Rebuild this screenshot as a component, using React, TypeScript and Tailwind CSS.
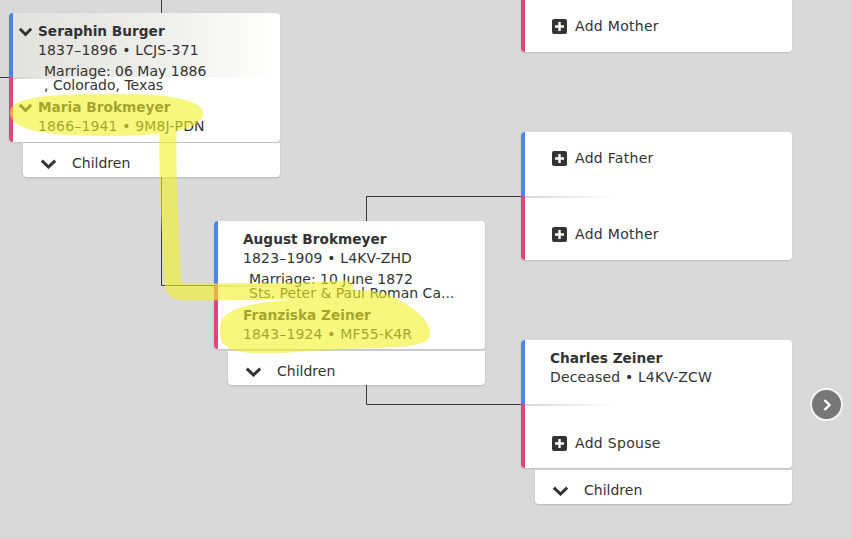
import React from "react";

const BLUE = "border-[#4a86ee]";
const PINK = "border-[#e2467c]";

function NameChev() {
  return (
    <svg width="15" height="10" viewBox="0 0 15 10">
      <path d="M1.8 1.8 L7.5 7.5 L13.2 1.8" stroke="#333" strokeWidth="2.8" fill="none" />
    </svg>
  );
}

function ChildChev() {
  return (
    <svg width="17" height="10" viewBox="0 0 17 10">
      <path d="M1.8 1.6 L8.5 8 L15.2 1.6" stroke="#333" strokeWidth="3" fill="none" />
    </svg>
  );
}

function PlusBox() {
  return (
    <svg width="15" height="15" viewBox="0 0 15 15">
      <rect x="0" y="0" width="15" height="15" rx="2" fill="#333" />
      <path d="M7.5 3 V12 M3 7.5 H12" stroke="#fff" strokeWidth="2.4" />
    </svg>
  );
}

function Row({ chev, bold, cls = "", children }: { chev?: boolean; bold?: boolean; cls?: string; children: React.ReactNode }) {
  return (
    <div className={`flex h-[19px] items-center ${cls}`}>
      <div className="flex w-[25px] items-center pl-[5px]">{chev && <NameChev />}</div>
      <span className={`whitespace-nowrap ${bold ? "text-[13.7px] font-bold" : "tracking-[0.15px]"}`}>{children}</span>
    </div>
  );
}

function Shell({ pos, topBg = "bg-white", topContent, bottomContent, overlay }: { pos: string; topBg?: string; topContent?: React.ReactNode; bottomContent?: React.ReactNode; overlay?: React.ReactNode }) {
  return (
    <div className={`absolute w-[271px] overflow-hidden rounded-[4px] shadow-[0_1px_2px_rgba(0,0,0,0.12)] ${pos}`}>
      <div className="flex h-full flex-col">
        <div className={`h-[64px] border-l-4 ${BLUE} ${topBg}`}>{topContent}</div>
        <div className={`relative flex-1 border-l-4 ${PINK} bg-white`}>
          <div className="absolute left-0 top-0 h-[2px] w-[90px] bg-linear-to-r from-[#d6d6d6] to-transparent" />
          {bottomContent}
        </div>
      </div>
      {overlay && <div className="absolute inset-0 pl-[4px] pt-[9px]">{overlay}</div>}
    </div>
  );
}

function AddRow({ label, cls }: { label: string; cls: string }) {
  return (
    <div className={`flex h-[19px] items-center gap-[8px] pl-[27px] ${cls}`}>
      <PlusBox />
      <span className="tracking-[0.3px]">{label}</span>
    </div>
  );
}

function ChildrenBar({ pos }: { pos: string }) {
  return (
    <div className={`absolute flex h-[34px] w-[257px] items-center gap-[15px] rounded-b-[4px] bg-white pl-[17px] pt-[7px] shadow-[0_1px_2px_rgba(0,0,0,0.15)] ${pos}`}>
      <ChildChev />
      <span>Children</span>
    </div>
  );
}

export default function App() {
  return (
    <div className="relative h-[539px] w-[852px] overflow-hidden bg-[#d9d9d9] font-['DejaVu_Sans',Verdana,sans-serif] text-[14px] text-[#333]">
      {/* connectors */}
      <svg className="absolute inset-0" width="852" height="539">
        <g stroke="#3a3a3a" strokeWidth="1" fill="none">
          <path d="M161.5 0 V13" />
          <path d="M0 77.5 H9" />
          <path d="M161.5 177 V285.5 H214" />
          <path d="M366.5 221 V196.5 H521" />
          <path d="M366.5 385 V404.5 H521" />
        </g>
      </svg>

      {/* card 1 */}
      <Shell
        pos="left-[9px] top-[13px] h-[129px]"
        topBg="bg-linear-to-r from-[#e2e2de] via-[#ededea] to-white"
        overlay={
          <>
            <Row chev bold>Seraphin Burger</Row>
            <Row>1837–1896 • LCJS-371</Row>
            <div className="mt-[4px] pl-[31px] leading-[14px] whitespace-nowrap">
              <div>Marriage: 06 May 1886</div>
              <div>, Colorado, Texas</div>
            </div>
            <Row chev bold cls="mt-[6px]">Maria Brokmeyer</Row>
            <Row>1866–1941 • 9M8J-PDN</Row>
          </>
        }
      />
      <ChildrenBar pos="left-[23px] top-[143px]" />

      {/* card 2 */}
      <Shell
        pos="left-[214px] top-[221px] h-[128px]"
        overlay={
          <>
            <Row bold>August Brokmeyer</Row>
            <Row>1823–1909 • L4KV-ZHD</Row>
            <div className="mt-[4px] pl-[31px] leading-[14px] whitespace-nowrap">
              <div>Marriage: 10 June 1872</div>
              <div>Sts. Peter &amp; Paul Roman Ca...</div>
            </div>
            <Row bold cls="mt-[6px]">Franziska Zeiner</Row>
            <Row>1843–1924 • MF55-K4R</Row>
          </>
        }
      />
      <ChildrenBar pos="left-[228px] top-[351px]" />

      {/* right top (partial) */}
      <Shell
        pos="left-[521px] top-[-76px] h-[128px]"
        bottomContent={<AddRow label="Add Mother" cls="mt-[29px]" />}
      />

      {/* right middle */}
      <Shell
        pos="left-[521px] top-[132px] h-[128px]"
        topContent={<AddRow label="Add Father" cls="mt-[17px]" />}
        bottomContent={<AddRow label="Add Mother" cls="mt-[29px]" />}
      />

      {/* right bottom */}
      <Shell
        pos="left-[521px] top-[340px] h-[128px]"
        topContent={
          <div className="pt-[9px]">
            <Row bold>Charles Zeiner</Row>
            <Row>Deceased • L4KV-ZCW</Row>
          </div>
        }
        bottomContent={<AddRow label="Add Spouse" cls="mt-[30px]" />}
      />
      <ChildrenBar pos="left-[535px] top-[470px]" />

      {/* next button */}
      <div className="absolute left-[810px] top-[388px] flex h-[33px] w-[33px] items-center justify-center rounded-full border-2 border-[#f4f4f4] bg-[#777]">
        <svg width="12" height="14" viewBox="0 0 12 14">
          <path d="M3.5 2 L8.5 7 L3.5 12" stroke="#fff" strokeWidth="2.4" fill="none" />
        </svg>
      </div>

      {/* highlighter overlay */}
      <svg className="pointer-events-none absolute inset-0" width="852" height="539">
        <g opacity="0.6" fill="#f2f22a" stroke="#f2f22a">
          <path
            strokeWidth="2"
            d="M11 113 C 10 99, 45 95, 100 95 C 160 94, 202 99, 202 113 C 202 129, 168 135, 100 135 C 40 135, 12 128, 11 113 Z"
          />
          <path
            fill="none"
            strokeWidth="17"
            strokeLinecap="round"
            strokeLinejoin="round"
            d="M168 130 C 167 170, 170 230, 173 284 C 174 291, 178 292, 190 292 L 300 291 L 345 289"
          />
          <path
            strokeWidth="2"
            d="M221 330 C 219 311, 245 304, 290 301 C 330 298, 355 285, 386 295 C 406 303, 431 320, 429 335 C 427 348, 385 346, 340 348 C 300 351, 250 356, 231 348 C 222 344, 221 337, 221 330 Z"
          />
        </g>
      </svg>
    </div>
  );
}
